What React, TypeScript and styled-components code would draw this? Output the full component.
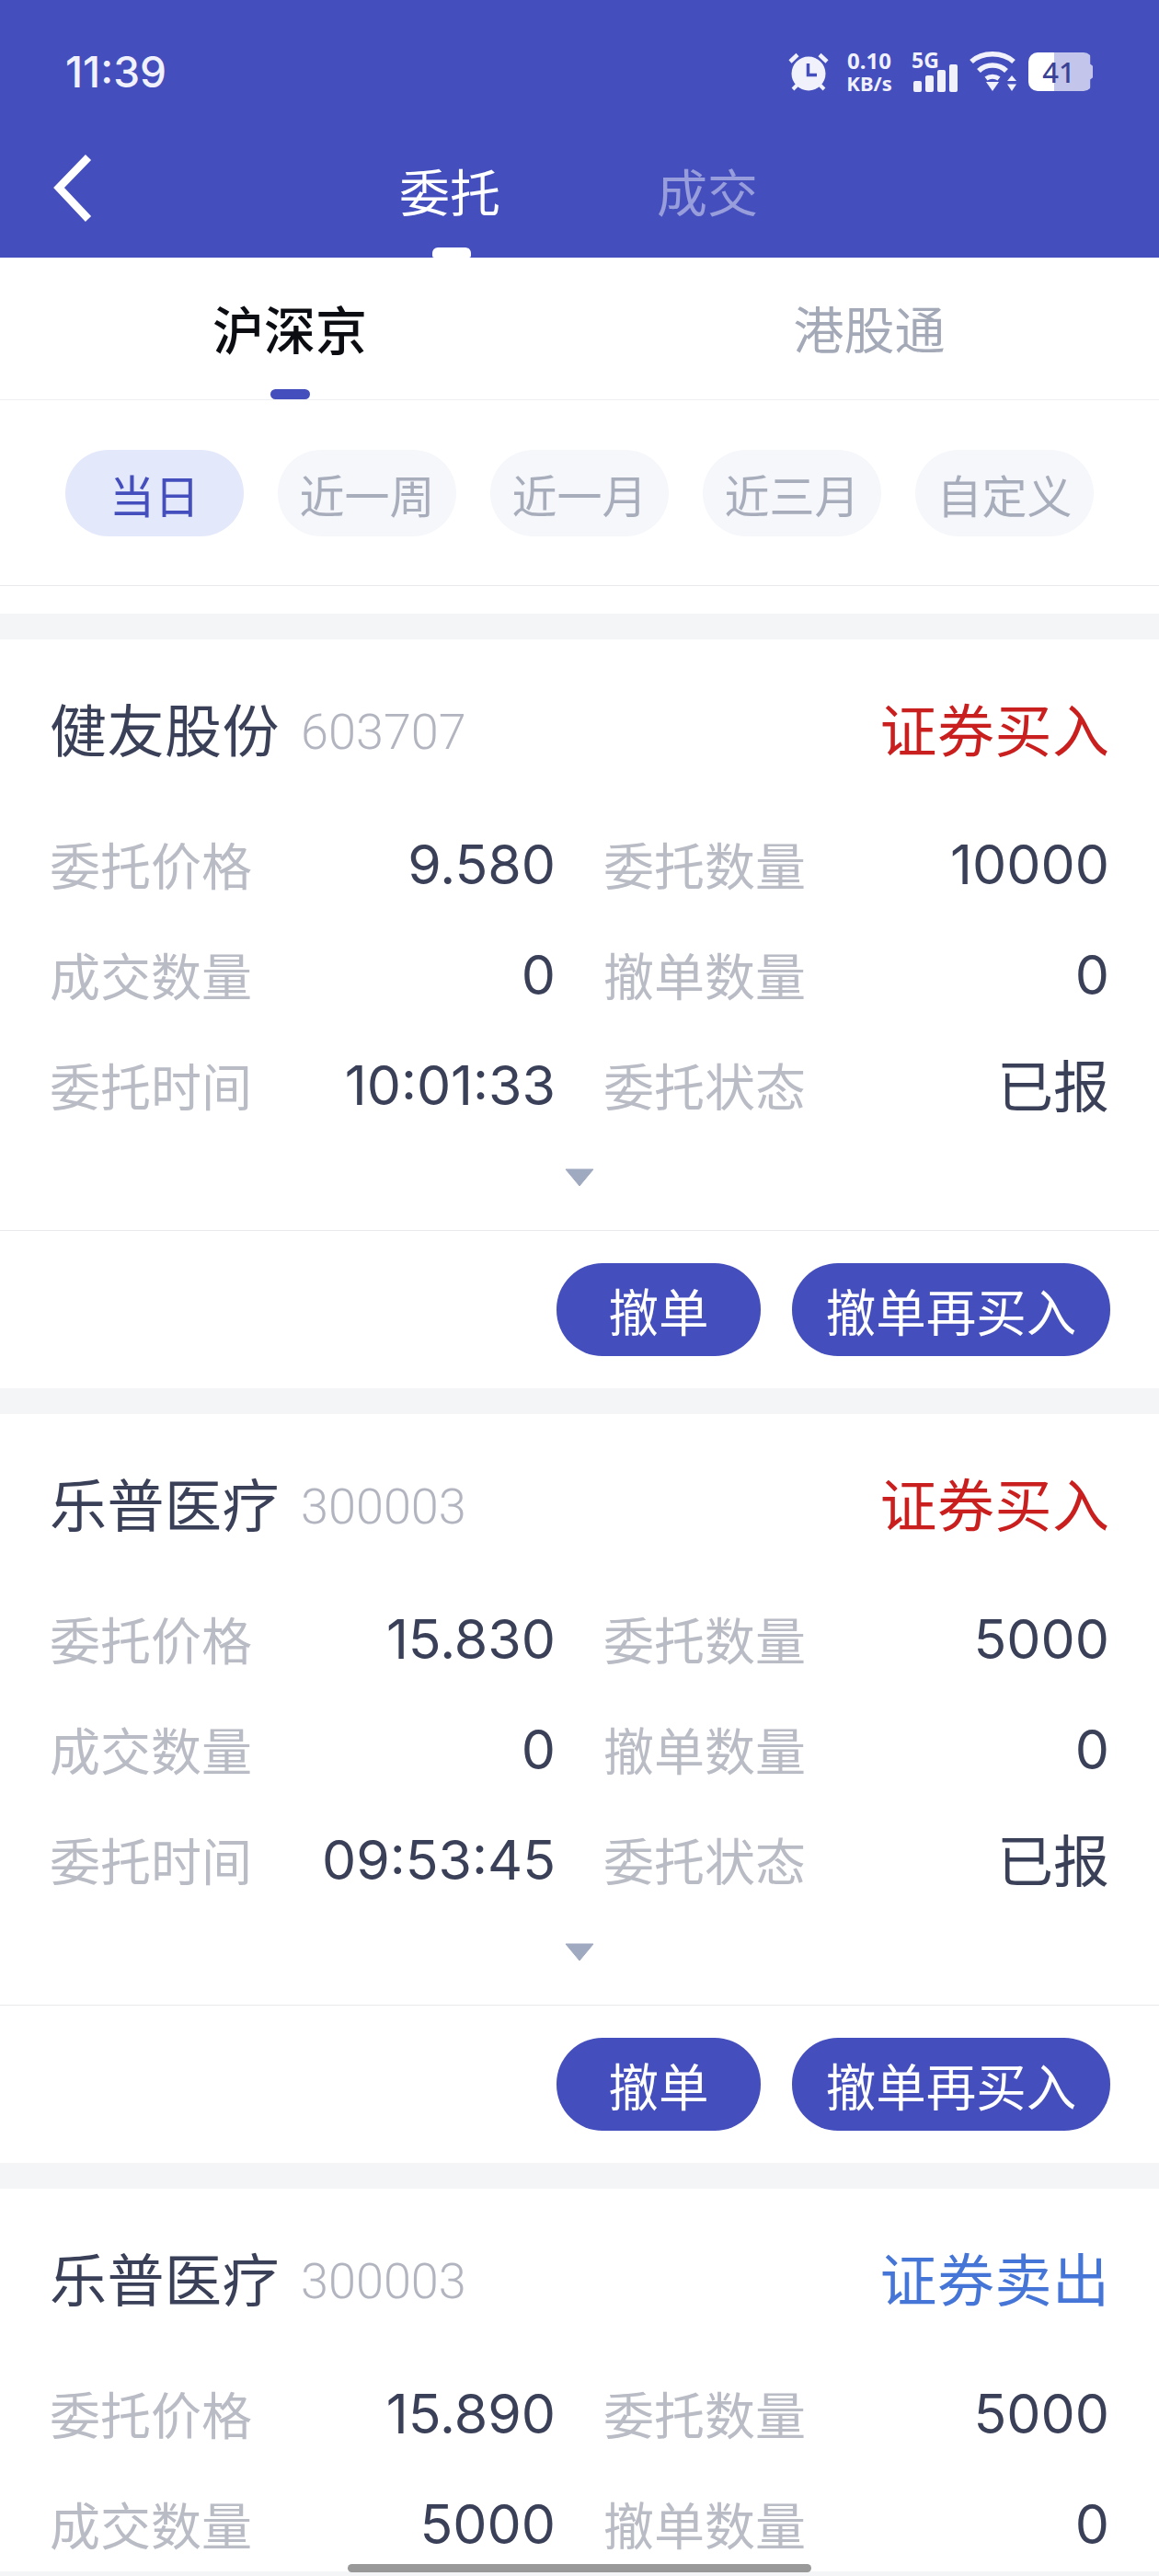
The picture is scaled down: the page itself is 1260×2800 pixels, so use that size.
import React from "react";
import styled, { createGlobalStyle } from "styled-components";

const BLUE = "#444ebd";
const CJK = `"Noto Sans CJK SC", "Noto Sans", sans-serif`;
const NUM = `Roboto, "Noto Sans CJK SC", sans-serif`;
const DIGITS = `Inter, "Noto Sans CJK SC", sans-serif`;
const ICON = "#f0f1fb";

const Global = createGlobalStyle`
  html, body { margin: 0; padding: 0; background: #f4f5f7; }
  * { box-sizing: border-box; }
`;

const Screen = styled.div`
  position: relative;
  width: 1260px;
  height: 2800px;
  display: flex;
  flex-direction: column;
  overflow: hidden;
  background: #f4f5f7;
  font-family: ${CJK};
`;

const Header = styled.header`
  flex: none;
  height: 280px;
  background: ${BLUE};
  display: flex;
  flex-direction: column;
`;

const StatusBar = styled.div`
  height: 156px;
  padding: 0 72px 0 71px;
  display: flex;
  align-items: center;
  justify-content: space-between;
  color: ${ICON};
`;

const Time = styled.span`
  font: 500 46px/1 ${DIGITS};
`;

const StatusIcons = styled.div`
  display: flex;
  align-items: center;
  height: 44px;
`;

const Speed = styled.div`
  width: 50px;
  margin-left: 19px;
  display: flex;
  flex-direction: column;
  align-items: center;
  font: 700 24px/24px "Noto Sans", sans-serif;
  white-space: nowrap;
`;

const SpeedUnit = styled.span`
  font-size: 22px;
  line-height: 24px;
`;

const Signal = styled.div`
  position: relative;
  width: 50px;
  height: 44px;
  margin-left: 21px;
`;

const SignalLabel = styled.span`
  position: absolute;
  left: 0;
  top: -3px;
  font: 700 23px/24px "Noto Sans", sans-serif;
`;

const Battery = styled.div`
  width: 70px;
  height: 42px;
  margin-left: 11px;
  border-radius: 10px;
  overflow: hidden;
  background: linear-gradient(to right, #fff 0, #fff 28px, #c3c6ea 28px, #c3c6ea 100%);
  clip-path: polygon(0 0, 96% 0, 96% 30%, 100% 35%, 100% 65%, 96% 70%, 96% 100%, 0 100%);
  color: #3a4296;
  font: 500 31px/42px "Noto Sans", sans-serif;
  text-align: center;
  padding-right: 4px;
`;

const Nav = styled.nav`
  flex: 1;
  display: flex;
  align-items: stretch;
  padding-left: 56px;
`;

const Back = styled.svg`
  width: 48px;
  height: 76px;
  align-self: center;
  margin-top: -28px;
`;

const TabGroup = styled.div`
  display: flex;
  gap: 172px;
  margin-left: 330px;
`;

const NavTab = styled.div<{ $active?: boolean }>`
  position: relative;
  width: 108px;
  padding-top: 20px;
  font-size: 55px;
  line-height: 60px;
  text-align: center;
  white-space: nowrap;
  color: ${(p) => (p.$active ? "#fff" : "rgba(255,255,255,0.45)")};
  ${(p) =>
    p.$active &&
    `&::after {
      content: "";
      position: absolute;
      left: 36px;
      bottom: 0;
      width: 42px;
      height: 11px;
      border-radius: 6px 6px 2px 2px;
      background: #fff;
    }`}
`;

const SubTabs = styled.div`
  flex: none;
  height: 155px;
  display: grid;
  grid-template-columns: 1fr 1fr;
  background: #fff;
  border-bottom: 1px solid #eeeff2;
`;

const SubTab = styled.div<{ $active?: boolean }>`
  position: relative;
  display: flex;
  align-items: center;
  justify-content: center;
  padding-bottom: 4px;
  font-size: ${(p) => (p.$active ? 56 : 55)}px;
  font-weight: ${(p) => (p.$active ? 500 : 400)};
  color: ${(p) => (p.$active ? "#0c0d12" : "#a4a9b8")};
  ${(p) =>
    p.$active &&
    `&::after {
      content: "";
      position: absolute;
      left: 50%;
      bottom: 0;
      width: 43px;
      height: 11px;
      margin-left: -21px;
      border-radius: 6px;
      background: ${BLUE};
    }`}
`;

const Filters = styled.div`
  flex: none;
  padding: 54px 71px 53px;
  display: flex;
  justify-content: space-between;
  background: #fff;
  border-bottom: 1px solid #e8e9ec;
`;

const Pill = styled.div<{ $active?: boolean }>`
  width: 194px;
  height: 94px;
  border-radius: 47px;
  display: flex;
  align-items: center;
  justify-content: center;
  font-size: 49px;
  color: ${(p) => (p.$active ? BLUE : "#a8adbc")};
  background: ${(p) => (p.$active ? "#e3e8fb" : "#f6f7fb")};
`;

const FilterGap = styled.div`
  flex: none;
  height: 30px;
  background: #fff;
`;

const List = styled.main`
  flex: 1;
  min-height: 0;
  display: flex;
  flex-direction: column;
  gap: 28px;
  padding-top: 28px;
`;

const Card = styled.section`
  flex: none;
  background: #fff;
  &:last-child {
    flex: 1;
  }
`;

const TitleRow = styled.div`
  padding: 46px 54px 38px;
  display: flex;
  align-items: center;
  height: 184px;
`;

const StockName = styled.span`
  font-size: 62px;
  line-height: 100px;
  color: #3a4058;
  letter-spacing: 0.5px;
`;

const StockCode = styled.span`
  margin-left: 23px;
  padding-top: 10px;
  font: 300 54px/100px ${NUM};
  color: #b2b5bf;
`;

const Side = styled.span<{ $sell?: boolean }>`
  margin-left: auto;
  margin-right: -0.5px;
  font-size: 62px;
  line-height: 100px;
  letter-spacing: 0.5px;
  color: ${(p) => (p.$sell ? "#4575d6" : "#c9201f")};
`;

const Rows = styled.div`
  padding: 0 54px;
  display: grid;
  grid-template-columns: 550px 550px;
  column-gap: 52px;
  grid-auto-rows: 120px;
`;

const Cell = styled.div`
  display: flex;
  align-items: center;
  justify-content: space-between;
`;

const Label = styled.span`
  margin-top: -3px;
  font-size: 55px;
  color: #b9bbc5;
  white-space: nowrap;
`;

const Value = styled.span<{ $text?: boolean }>`
  margin-top: ${(p) => (p.$text ? -4 : 0)}px;
  font: 400 ${(p) => (p.$text ? 61 : 59)}px/1 ${(p) => (p.$text ? CJK : DIGITS)};
  color: #3a4058;
  white-space: nowrap;
`;

const Expand = styled.div`
  height: 98px;
  padding-top: 31px;
  display: flex;
  justify-content: center;
`;

const Arrow = styled.svg`
  width: 32px;
  height: 20px;
  display: block;
`;

const Actions = styled.div`
  border-top: 1px solid #e8e9ec;
  padding: 35px 53px 35px 54px;
  display: flex;
  justify-content: flex-end;
  gap: 34px;
`;

const ActionButton = styled.button<{ $wide?: boolean }>`
  width: ${(p) => (p.$wide ? 346 : 222)}px;
  height: 101px;
  padding: 0;
  border: 0;
  border-radius: 50px;
  background: ${BLUE};
  color: #fff;
  font-family: ${CJK};
  font-size: 54.5px;
`;

const BottomStrip = styled.div`
  flex: none;
  height: 5px;
  background: #f4f5f7;
`;

const Gesture = styled.div`
  position: absolute;
  left: 378px;
  bottom: 4px;
  width: 504px;
  height: 9px;
  border-radius: 5px;
  background: #999;
`;

const AlarmIcon = () => (
  <svg width="44" height="44" viewBox="0 0 44 44">
    <circle cx="22" cy="24" r="18.5" fill={ICON} />
    <path d="M2 11 L10 3.5 M42 11 L34 3.5" stroke={ICON} strokeWidth="4.5" />
    <path d="M5 41 L10 36 M39 41 L34 36" stroke={ICON} strokeWidth="4" />
    <path d="M21.5 13 V25.5 H31" fill="none" stroke={BLUE} strokeWidth="3.5" />
  </svg>
);

const SignalBars = () => (
  <svg width="48" height="30" viewBox="0 0 48 30" style={{ position: "absolute", left: 2, bottom: 0 }}>
    <rect x="0" y="18" width="9" height="12" rx="2" fill={ICON} />
    <rect x="13" y="12" width="9" height="18" rx="2" fill={ICON} />
    <rect x="26" y="6" width="9" height="24" rx="2" fill={ICON} />
    <rect x="39" y="0" width="9" height="30" rx="2" fill={ICON} />
  </svg>
);

const WifiIcon = () => (
  <svg width="54" height="44" viewBox="0 0 54 44" style={{ marginLeft: 12 }}>
    <path d="M3 11 C15 0 37 0 49 11" fill="none" stroke={ICON} strokeWidth="5.5" />
    <path d="M11 21 C19 13 33 13 41 21" fill="none" stroke={ICON} strokeWidth="5.5" />
    <path d="M19 29.5 C23 26.5 29 26.5 33 29.5" fill="none" stroke={ICON} strokeWidth="5" />
    <path d="M19 33 H33 L26 43 Z" fill={ICON} />
    <path d="M42 32 L47 26 L52 32 Z M42 35.500 H52 L47 43 Z" fill={ICON} />
  </svg>
);

type Order = {
  name: string;
  code: string;
  side: string;
  sell?: boolean;
  price: string;
  qty: string;
  filled: string;
  cancelled: string;
  time?: string;
  status?: string;
};

const orders: Order[] = [
  { name: "健友股份", code: "603707", side: "证券买入", price: "9.580", qty: "10000", filled: "0", cancelled: "0", time: "10:01:33", status: "已报" },
  { name: "乐普医疗", code: "300003", side: "证券买入", price: "15.830", qty: "5000", filled: "0", cancelled: "0", time: "09:53:45", status: "已报" },
  { name: "乐普医疗", code: "300003", side: "证券卖出", sell: true, price: "15.890", qty: "5000", filled: "5000", cancelled: "0" },
];

export default function App() {
  return (
    <Screen>
      <Global />
      <Header>
        <StatusBar>
          <Time>11:39</Time>
          <StatusIcons>
            <AlarmIcon />
            <Speed>
              <span>0.10</span>
              <SpeedUnit>KB/s</SpeedUnit>
            </Speed>
            <Signal>
              <SignalLabel>5G</SignalLabel>
              <SignalBars />
            </Signal>
            <WifiIcon />
            <Battery>41</Battery>
          </StatusIcons>
        </StatusBar>
        <Nav>
          <Back viewBox="0 0 48 76">
            <path d="M40 5 L8 38 L40 72" fill="none" stroke="#fff" strokeWidth="8.500" />
          </Back>
          <TabGroup>
            <NavTab $active>委托</NavTab>
            <NavTab>成交</NavTab>
          </TabGroup>
        </Nav>
      </Header>
      <SubTabs>
        <SubTab $active>沪深京</SubTab>
        <SubTab>港股通</SubTab>
      </SubTabs>
      <Filters>
        <Pill $active>当日</Pill>
        <Pill>近一周</Pill>
        <Pill>近一月</Pill>
        <Pill>近三月</Pill>
        <Pill>自定义</Pill>
      </Filters>
      <FilterGap />
      <List>
        {orders.map((o, i) => (
          <Card key={i}>
            <TitleRow>
              <StockName>{o.name}</StockName>
              <StockCode>{o.code}</StockCode>
              <Side $sell={o.sell}>{o.side}</Side>
            </TitleRow>
            <Rows>
              <Cell><Label>委托价格</Label><Value>{o.price}</Value></Cell>
              <Cell><Label>委托数量</Label><Value>{o.qty}</Value></Cell>
              <Cell><Label>成交数量</Label><Value>{o.filled}</Value></Cell>
              <Cell><Label>撤单数量</Label><Value>{o.cancelled}</Value></Cell>
              {o.time && (
                <>
                  <Cell><Label>委托时间</Label><Value>{o.time}</Value></Cell>
                  <Cell><Label>委托状态</Label><Value $text>{o.status}</Value></Cell>
                </>
              )}
            </Rows>
            {o.time && (
              <>
                <Expand>
                  <Arrow viewBox="0 0 32 20">
                    <path d="M1 1 H31 L16 19 Z" fill="#9fa9c0" stroke="#9fa9c0" strokeLinejoin="round" />
                  </Arrow>
                </Expand>
                <Actions>
                  <ActionButton>撤单</ActionButton>
                  <ActionButton $wide>撤单再买入</ActionButton>
                </Actions>
              </>
            )}
          </Card>
        ))}
      </List>
      <BottomStrip />
      <Gesture />
    </Screen>
  );
}
